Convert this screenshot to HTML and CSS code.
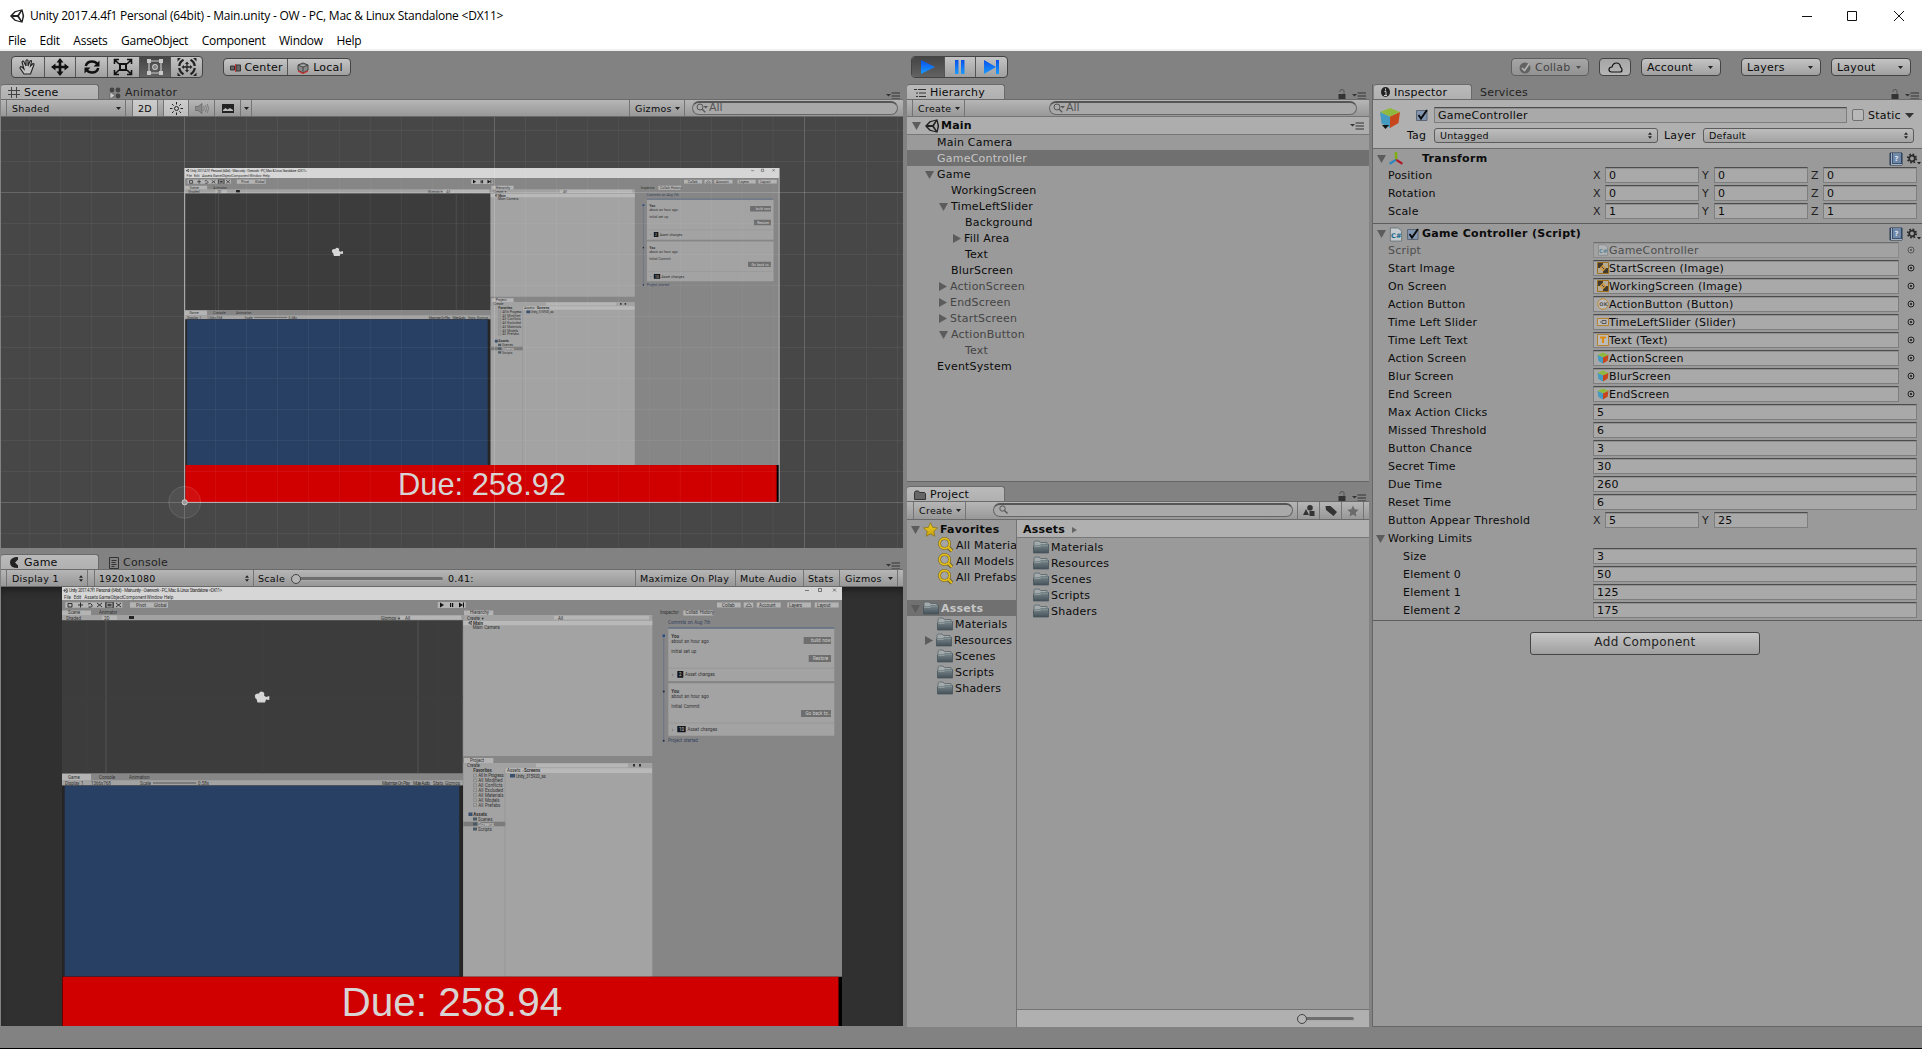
FILE: index.html
```html
<!DOCTYPE html>
<html lang="en">
<head>
<meta charset="utf-8">
<title>Unity 2017.4.4f1 Personal (64bit) - Main.unity - OW</title>
<link rel="stylesheet" href="styles.css">
</head>
<body>
<svg class="defs" width="0" height="0">
  <defs>
    <linearGradient id="blue" x1="0" y1="0" x2="0" y2="1"><stop offset="0" stop-color="#0a50e8"/><stop offset="1" stop-color="#1a9bff"/></linearGradient>
    <linearGradient id="fold" x1="0" y1="0" x2="0" y2="1"><stop offset="0" stop-color="#79868a"/><stop offset="1" stop-color="#46525a"/></linearGradient>
    <linearGradient id="gold" x1="0" y1="0" x2="0" y2="1"><stop offset="0" stop-color="#f0d020"/><stop offset="1" stop-color="#c8a010"/></linearGradient>
    <symbol id="unity" viewBox="0 0 16 16"><path d="M1 8 5.5 3.2 13.5 1.2 15.2 8 13.5 14.8 5.500 12.800ZM4 7.100h4.500L11.400 2.800 6.500 4.200ZM4 8.900l2.500 2.900 4.900 1.400-2.900-4.300ZM10 8l2.700 4.600L13.600 8l-.9-4.600Z" fill="#222" fill-rule="evenodd"/></symbol>
    <symbol id="folder" viewBox="0 0 16 14"><path d="M1 12V2.500Q1 1 2.500 1H6l1.500 1.500H14V12Z" fill="#a2aaac" stroke="#59656a" stroke-width=".8"/><path d="M.5 13V6H7l1-1.500h7.500V13Z" fill="url(#fold)" stroke="#445057" stroke-width=".7"/><path d="M1 6.500h6.300l1-1.500H15" fill="none" stroke="#9ba7aa" stroke-width=".8"/></symbol>
    <symbol id="menu" viewBox="0 0 14 8"><path d="M0 2h5L2.500 4.500Z" fill="#333"/><path d="M5.500 1.500H14M5.500 4.500H14M5.500 7.500H14" transform="translate(0 -.5)" stroke="#333" stroke-width="1"/></symbol>
    <symbol id="lock" viewBox="0 0 8 10"><path d="M.5 5h7v5h-7Z" fill="#333"/><path d="M2 3V2q0-1.500 2-1.500t2 1.500V5" fill="none" stroke="#555" stroke-width="1"/></symbol>
    <symbol id="down" viewBox="0 0 9 8"><path d="M0 0h9L4.500 8Z" fill="#5c5c5c"/></symbol>
    <symbol id="right" viewBox="0 0 8 9"><path d="M0 0v9L8 4.500Z" fill="#5c5c5c"/></symbol>
    <symbol id="caret" viewBox="0 0 5 3"><path d="M0 0h5L2.500 3Z" fill="#222"/></symbol>
    <symbol id="updown" viewBox="0 0 5 8"><path d="M0 3h5L2.500 0ZM0 5h5L2.500 8Z" fill="#222"/></symbol>
    <symbol id="find" viewBox="0 0 12 10"><circle cx="4" cy="4" r="3" fill="none" stroke="#555" stroke-width="1"/><path d="m6.200 6.200 3 3" stroke="#555" stroke-width="1.300"/><path d="M7.500 3H12L9.700 5.500Z" fill="#555"/></symbol>
    <symbol id="glass" viewBox="0 0 9 9"><circle cx="3.500" cy="3.500" r="2.700" fill="none" stroke="#555" stroke-width="1"/><path d="m5.500 5.500 3 3" stroke="#555" stroke-width="1.400"/></symbol>
    <symbol id="goldfind" viewBox="0 0 17 16"><circle cx="7.500" cy="6.500" r="5" fill="#a5a5a5" stroke="#6b6030" stroke-width="3"/><path d="m11 10 4 4" stroke="#6b6030" stroke-width="4"/><circle cx="7.500" cy="6.500" r="5" fill="none" stroke="#e4bd18" stroke-width="1.800"/><path d="m11 10 4 4" stroke="#e4bd18" stroke-width="2.200"/></symbol>
    <symbol id="star" viewBox="0 0 16 16"><path d="m8 .8 2.200 4.800 5.300.7-3.900 3.600.9 5.300L8 12.600l-4.500 2.600.9-5.300L.5 6.300l5.300-.7Z"/></symbol>
    <symbol id="cube" viewBox="0 0 22 22"><path d="M1 5 11 9.500V21L2.500 16.500Z" fill="#459ac0"/><path d="M21 5 11 9.500V21l8.500-5Z" fill="#c8461c"/><path d="M1 5 11 1l10 4-10 4.500Z" fill="#91b83e"/></symbol>
    <symbol id="check" viewBox="0 0 12 12"><path d="M.5 1.500h10.500v10H.5Z" fill="#8295b0" stroke="#5d6673"/><path d="m2.500 6 2.500 3.500L11 1" fill="none" stroke="#0a0a0a" stroke-width="1.900"/></symbol>
    <symbol id="book" viewBox="0 0 14 14"><path d="M1 1h12v12H1Z" fill="#3a5374" stroke="#27384e"/><path d="M4 1h8v10H4Z" fill="#6f88a8"/><path d="M2.500 1v12M3 12.500h10" stroke="#c6ccd4" stroke-width=".8"/><text x="5.600" y="9.300" font-family="DejaVu Sans" font-size="7" font-weight="bold" fill="#dde4ec">?</text></symbol>
    <symbol id="gear" viewBox="0 0 14 12"><circle cx="5" cy="5.500" r="2.800" fill="none" stroke="#2a2a2a" stroke-width="1.800"/><circle cx="5" cy="5.500" r="4.200" fill="none" stroke="#2a2a2a" stroke-width="1.800" stroke-dasharray="1.700 1.600"/><path d="M10 9h4l-2 2.500Z" fill="#222"/></symbol>
    <symbol id="target" viewBox="0 0 8 8"><circle cx="4" cy="4" r="3" fill="none" stroke="#222" stroke-width="1"/><circle cx="4" cy="4" r="1" fill="#111"/></symbol>
    <symbol id="cs" viewBox="0 0 14 16"><path d="M1 1h8.500L13 4.500V15H1Z" fill="#c5cbce" stroke="#6e777b"/><text x="1.700" y="12" font-family="DejaVu Sans" font-size="7" font-weight="bold" fill="#15678c">C#</text></symbol>
    <symbol id="img" viewBox="0 0 12 12"><path d="M.5.5h11v11H.5Z" fill="#b4aa98" stroke="#a06f1c"/><path d="M1 1h5v5H1ZM6 6h5v5H6Z" fill="#403a30"/><path d="m6 3.500 2.500 2.500L6 8.500 3.500 6Z" fill="none" stroke="#d39a3c" stroke-width="1.300"/></symbol>
  </defs>
</svg>

<header class="titlebar">
  <svg width="16" height="16"><use href="#unity"/></svg>
  <span class="title">Unity 2017.4.4f1 Personal (64bit) - Main.unity - OW - PC, Mac &amp; Linux Standalone &lt;DX11&gt;</span>
  <svg class="winctl" width="110" height="12"><path d="M3 6.500h10M48.500 1.500h9v9h-9ZM95 1l10 10M105 1 95 11" fill="none" stroke="#111"/></svg>
</header>
<nav class="menubar"><span>File</span><span>Edit</span><span>Assets</span><span>GameObject</span><span>Component</span><span>Window</span><span>Help</span></nav>

<section class="toolbar">
  <div class="group tools">
    <i><svg width="20" height="18" viewBox="0 0 20 18"><path d="M6 16 2 10q0-2 2-1l2 2L4 4q1-2 2 0l2 4V2.500q1-1.500 2 0V8l2-5q1.500-1 1.500.5L12.500 8l2.500-2.500q1.500 0 .8 1.500L14 12l-1.500 4Z" fill="#c4c4c4" stroke="#222" stroke-width="1.100"/></svg></i>
    <i><svg width="18" height="18" viewBox="0 0 18 18"><path d="M9 2v14M2 9h14" stroke="#111" stroke-width="2.600"/><path d="m9 0 3.500 4.500h-7ZM9 18l3.500-4.500h-7ZM0 9l4.500-3.500v7ZM18 9l-4.500-3.500v7Z" fill="#111"/></svg></i>
    <i><svg width="18" height="18" viewBox="0 0 18 18"><path d="M2.800 8Q4 3.500 9 3.500q3.500 0 5.500 2.500M15.200 10q-1 4.500-6.200 4.500-3.500 0-5.500-2.500" fill="none" stroke="#111" stroke-width="2.500"/><path d="M16.500 2.500V8.500h-6ZM1.500 15.500v-6h6Z" fill="#111"/></svg></i>
    <i><svg width="20" height="18" viewBox="0 0 20 18"><path d="M7 6h6v6H7Z" fill="none" stroke="#111" stroke-width="2"/><path d="m2 2 4 4m12-4-4 4M2 16l4-4m12 4-4-4M1.500 6V1.500H6m8 0h4.500V6M1.500 12v4.500H6m8 0h4.500V12" fill="none" stroke="#111" stroke-width="1.600"/></svg></i>
    <i class="on"><svg width="18" height="18" viewBox="0 0 18 18"><path d="M3 3h12v12H3Z" fill="none" stroke="#c8c8c8" stroke-width="1.200"/><path d="M1 1h4v4H1Zm12 0h4v4h-4ZM1 13h4v4H1Zm12 0h4v4h-4Z" fill="#c8c8c8"/><circle cx="9" cy="9" r="2.300" fill="none" stroke="#c8c8c8" stroke-width="1.200"/><circle cx="9" cy="9" r=".8" fill="#c8c8c8"/></svg></i>
    <i><svg width="20" height="18" viewBox="0 0 20 18"><path d="M10 5v8M6 9h8" stroke="#222" stroke-width="1.300"/><path d="m10 3.500 2 2.500H8ZM10 14.500l2-2.500H8ZM4.500 9 7 7v4ZM15.500 9 13 7v4Z" fill="#222"/><path d="M2.300 8Q2.600 4 6.500 1.800m7 0Q17.400 4 17.700 8m0 2q-.3 4-4.200 6.200m-7 0Q2.600 14 2.300 10" fill="none" stroke="#222" stroke-width="2.300"/><path d="M.5 0H4L.5 3.500ZM19.500 0H16l3.500 3.500ZM.5 18H4L.5 14.500ZM19.500 18H16l3.500-3.500Z" fill="#222"/></svg></i>
  </div>
  <div class="group pivot">
    <i><svg width="11" height="8" viewBox="0 0 11 8"><path d="M.5 2h4v4h-4ZM6 1h4.500v6H6Z" fill="#666" stroke="#333"/><path d="M5.500 0v8" stroke="#c33" stroke-width="1"/></svg>Center</i>
    <i><svg width="12" height="12" viewBox="0 0 12 12"><path d="M1 3l5-2 5 2v5l-5 3-5-3Zm0 0 5 2 5-2M6 5v6" fill="#888" stroke="#444"/><path d="m1 9 5 2.500L11 9" fill="none" stroke="#c33" stroke-width="1.300"/></svg>Local</i>
  </div>
  <div class="group play">
    <i class="on"><svg width="16" height="16"><path d="M1 1v14L15 8Z" fill="url(#blue)"/></svg></i>
    <i><svg width="10" height="14"><path d="M0 0h3.500v14H0ZM6 0h3.500v14H6Z" fill="url(#blue)"/></svg></i>
    <i><svg width="16" height="14"><path d="M0 0v14l12-7ZM12 0h3v14h-3Z" fill="url(#blue)"/></svg></i>
  </div>
  <div class="btn collab"><svg width="12" height="12" viewBox="0 0 12 12"><circle cx="6" cy="6" r="5.500" fill="#4b4b4b"/><path d="m3 6 2.500 2.500L10 2" fill="none" stroke="#ddd" stroke-width="1.700"/></svg>Collab<svg class="end" width="5" height="3"><use href="#caret"/></svg></div>
  <div class="btn cloud"><svg width="15" height="11" viewBox="0 0 15 11"><path d="M3.500 10Q1 10 1 7.500T4 5q1-4 4.500-4t4 4Q14 6 14 8t-2 2Z" fill="none" stroke="#111" stroke-width="1.200"/></svg></div>
  <div class="btn acct">Account<svg class="end" width="5" height="3"><use href="#caret"/></svg></div>
  <div class="btn lays">Layers<svg class="end" width="5" height="3"><use href="#caret"/></svg></div>
  <div class="btn">Layout<svg class="end" width="5" height="3"><use href="#caret"/></svg></div>
</section>

<main class="work">
  <div class="col left">
    <section class="panel scene">
      <div class="tabs"><div class="tab"><svg width="12" height="11"><path d="M3.500 0v11M8.500 0v11M0 3.500h12M0 7.500h12" stroke="#444"/></svg>Scene</div><div class="tab off"><svg width="12" height="12"><circle cx="3" cy="3" r="2.400" fill="#444"/><circle cx="9" cy="3" r="2.400" fill="#444"/><circle cx="9" cy="9" r="2.400" fill="#444"/><path d="M1 5v7l5-3.500Z" fill="#ccc" stroke="#555" stroke-width=".6"/></svg>Animator</div><svg class="pm" width="14" height="8"><use href="#menu"/></svg></div>
      <div class="bar">
        <span class="cell shaded">Shaded<svg width="5" height="3"><use href="#caret"/></svg></span>
        <span class="cell lit d2">2D</span>
        <span class="cell lit sun"><svg width="13" height="13" viewBox="0 0 13 13"><circle cx="6.500" cy="6.500" r="2" fill="none" stroke="#222"/><path d="M6.500 0v2.500m0 8V13M0 6.500h2.500m8 0H13M2 2l1.700 1.700m5.600 5.600L11 11M11 2 9.300 3.700M3.700 9.300 2 11" stroke="#222"/></svg></span>
        <span class="cell snd"><svg width="14" height="11" viewBox="0 0 14 11"><path d="M0 3.500h3L7 .5v10L3 7.500H0Z" fill="#888" stroke="#666" stroke-width=".7"/><path d="M8.500 3q1.500 2.500 0 5M10.500 2q2 3.500 0 7M12.300 1q2.400 4.500 0 9" fill="none" stroke="#777" stroke-width=".9"/></svg></span>
        <span class="cell pic"><svg width="12" height="9"><path d="M0 0h12v9H0Z" fill="#222"/><path d="M1 7V6l2.500-2 2 1.500L8 4l3 2v1Z" fill="#bbb"/></svg></span>
        <span class="cell picdd"><svg width="5" height="3"><use href="#caret"/></svg></span>
        <span class="cell giz">Gizmos<svg width="5" height="3"><use href="#caret"/></svg></span>
        <span class="search"><svg width="12" height="10"><use href="#find"/></svg>All</span>
      </div>
      <div class="view sceneview">
        <svg width="903" height="431" viewBox="1 117 903 431">
          <svg x="185" y="168" width="594.300" height="334.300" viewBox="0 0 780 438.700" preserveAspectRatio="none">
            <g id="capture"><g class="shot">
              <path d="M0 0h780v439H0Z" fill="#868686"/><path d="M0 0h780v13H0Z" fill="#d6d6d6"/>
              <svg x="1" y="1" width="5" height="5"><use href="#unity"/></svg>
              <text x="7" y="5.200" textLength="153">Unity 2017.4.7f1 Personal (64bit) - Main.unity - Overwork - PC, Mac &amp; Linux Standalone &lt;DX11&gt;</text>
              <text x="2" y="11.500">File</text><text x="11.700" y="11.500">Edit</text><text x="22.300" y="11.500">Assets</text><text x="36.700" y="11.500">GameObject</text><text x="61" y="11.500">Component</text><text x="84.700" y="11.500">Window</text><text x="102" y="11.500">Help</text>
              <path d="M743 3.500h4M756.500 1.500h3v3h-3ZM771 1.500l3 3m0-3-3 3" fill="none" stroke="#333" stroke-width=".6"/>
              <path d="M3.300 15.200h57v5.600h-57ZM68 15.200h38v5.600H68ZM375.700 15h28v6h-28ZM655 15.400h23.700v5H655ZM681.700 15.400h9.600v5h-9.600ZM694.700 15.400h24v5h-24ZM725.300 15.400h23.700v5h-23.700ZM752.700 15.400h24v5h-24Z" fill="#b4b4b4"/>
              <path d="M43 15.200h9v5.600h-9Z" fill="#444"/>
              <path d="M6 16.500h4v3.500H6ZM16 18h5M18.500 15.500v5M26 17q3-1.500 4 1t-3.500 2M35 16l5 4m0-4-5 4M54 16l5 4m0-4-5 4" fill="none" stroke="#222" stroke-width=".9"/><path d="M45 16.300h5v3.500h-5Z" fill="none" stroke="#ccc" stroke-width=".7"/>
              <path d="M378 15.500v5l4-2.500ZM388 16h1.200v4H388Zm2 0h1.200v4H390ZM397 15.500v5l4-2.500Zm4 0h1v5h-1Z" fill="#111"/>
              <text x="74" y="19.700">Pivot</text><text x="92" y="19.700">Global</text><text x="660" y="19.700">Collab</text><text x="697" y="19.700">Account</text><text x="727" y="19.700">Layers</text><text x="755" y="19.700">Layout</text><path d="m684 19.500 2-2.500h2l1.500 2.500Z" fill="none" stroke="#333" stroke-width=".5"/>
              <path d="M0 23.400h29v5H0ZM402 23.400h29.300v5H402ZM621.300 23.400h30v5h-30ZM0 187h29v6.500H0ZM402 171h29.300v5H402Z" fill="#b4b4b4"/>
              <path d="M0 28h400.700v5.400H0ZM401.300 28h189v5.400h-189ZM0 193.300h400.700v5H0ZM401.300 176h189v5h-189Z" fill="#a2a2a2"/>
              <path d="M40 28.500h15v4.500H40ZM338 28.700h61v3.800h-61ZM492 28.700h95v3.800h-95ZM474 176.500h92v3.800h-92Z" fill="#b6b6b6"/>
              <text x="6" y="27.400">Scene</text><text x="37" y="27.400">Animator</text><text x="408" y="27.400">Hierarchy</text><text x="598" y="27.400">Inspector</text><text x="623.500" y="27.400">Collab History</text>
              <text x="4" y="32.500">Shaded</text><text x="42" y="32.500">2D</text><text x="319" y="32.500">Gizmos ▾</text><text x="405" y="32.500">Create ▾</text><text x="343" y="32.500">All</text><text x="496" y="32.500">All</text><path d="M67 29h5v3h-5Z" fill="#222"/>
              <path d="M0 33.300h400.700v153H0Z" fill="#3c3c3c"/><path d="M44 33.300v153M356 33.300v153" stroke="#575757" stroke-width=".9"/><path d="M25 33.300v153M201 33.300v153M376 33.300v153M0 110h401" stroke="#424242" stroke-width=".6"/>
              <path d="M193 108q1-2 4-1.500 1-3 4-1.500 2 1 1 3.500l2 1.500 3.300-1v4l-3.300-.5-1 3h-7.500l-1-3.500q-2-1-1.500-4Z" fill="#d6d6d6"/>
              <text x="6" y="191.800">Game</text><text x="37" y="191.800">Console</text><text x="67" y="191.800">Animation</text>
              <text x="3" y="197.600">Display 1</text><text x="29" y="197.600">1366x768</text><text x="78" y="197.600">Scale</text><path d="M91 196h43" stroke="#555"/><text x="136" y="197.600">0.58x</text><text x="320" y="197.600" textLength="28">Maximize On Play</text><text x="351" y="197.600" textLength="17">Mute Audio</text><text x="371" y="197.600">Stats</text><text x="383" y="197.600">Gizmos</text>
              <path d="M0 198.400h401v192H0Z" fill="#252525"/><path d="M2.700 198.700h394.600v191H2.700Z" fill="#284063"/>
              <path d="M401.300 33.400h189v135.600h-189ZM401.300 181h189v209h-189Z" fill="#a3a3a3"/><path d="M401.300 33.700h189v4.600h-189ZM443 181.300h147v4.700H443Z" fill="#b9b9b9"/><path d="M443 181v209" stroke="#939393" stroke-width=".7"/>
              <svg x="406" y="33.700" width="4.500" height="4.500"><use href="#unity"/></svg>
              <text class="b" x="411" y="37.500">Main</text><text x="410.700" y="42.300">Main Camera</text>
              <text x="408" y="175">Project</text><text x="405" y="180">Create</text><path d="M571 177h2v2.500h-2ZM577 177h2v2.500h-2Z" fill="#333"/>
              <text class="b" x="411.300" y="185.400">Favorites</text><text x="416.300" y="190.300" textLength="25.500">All In Progress</text><text x="416.300" y="195.200">All Modified</text><text x="416.300" y="200.100">All Conflicts</text><text x="416.300" y="205">All Excluded</text><text x="416.300" y="209.900">All Materials</text><text x="416.300" y="214.800">All Models</text><text x="416.300" y="219.700">All Prefabs</text>
              <path d="M411.500 187h3v3h-3Zm0 4.900h3v3h-3Zm0 4.900h3v3h-3Zm0 4.900h3v3h-3Zm0 4.900h3v3h-3Zm0 4.900h3v3h-3Zm0 4.900h3v3h-3Z" fill="none" stroke="#777" stroke-width=".5"/>
              <path d="M401.300 234.700h42v4.600h-42Z" fill="#7b7b7b"/><path d="M406.500 225.500h4v3.500h-4ZM448 187h5v3.500h-5Z" fill="#39506f"/><path d="M411 230.500h4v3h-4Zm0 5h4v3h-4Zm0 5h4v3h-4Z" fill="#4b5962"/>
              <text class="b" x="411.300" y="229">Assets</text><text x="416" y="234">Scenes</text><text class="lt" x="416" y="239">Screens</text><text x="416" y="244">Scripts</text>
              <text x="445" y="185.400">Assets ›</text><text class="b" x="462" y="185.400">Screens</text><text x="453.700" y="190.900" textLength="30">Unity_315920_as</text>
              <text class="bl" x="606" y="36.700">Commits on Aug 7th</text>
              <path d="M606.300 42h166v52h-166ZM606.300 96.300h166v52.400h-166Z" fill="#a3a3a3"/><path d="M606.300 40h166v1.700h-166Z" fill="#6a7688"/><path d="M606.300 81.200h166M606.300 136h166" stroke="#949494" stroke-width=".7"/>
              <path d="M601.700 48.700v105" stroke="#6f7687" stroke-width="1.200"/><path d="M600.500 47.500h2.500v2.500h-2.500Z" fill="#2c4d80"/><circle cx="601.700" cy="104.500" r="1" fill="#222c44"/><circle cx="601.700" cy="153.700" r="1" fill="#222c44"/>
              <path d="M741.700 50H769v7h-27.300ZM746.700 68H769v7h-22.300ZM739 123h30v7h-30Z" fill="#6e6e6e"/><path d="M615.300 84h6v6.700h-6ZM615.300 139h8.400v6.300h-8.400Z" fill="#15171c"/>
              <text class="b" x="609.300" y="51.300">You</text><text x="609.300" y="56.300">about an hour ago</text><text x="609.300" y="65.700">initial set up</text><text class="lt" x="749" y="55">build now</text><text class="lt" x="751" y="73">Restore</text><text x="610" y="89">›</text><text class="lt" x="617" y="89">2</text><text x="623" y="89">Asset changes</text>
              <text class="b" x="609.300" y="106">You</text><text x="609.300" y="111.300">about an hour ago</text><text x="609.300" y="120.600">Initial Commit</text><text class="lt" x="743.500" y="128">Go back to...</text><text x="610" y="144">›</text><text class="lt" x="617" y="144">10</text><text x="625.500" y="144">Asset changes</text>
              <text class="bl" x="606" y="155.300">Project started</text>
              <path d="M0 389.700h780v49.300H0Z" fill="#000"/><path d="M.5 389.700H776.500v49.300H.5Z" fill="#d00000"/>
            </g></g>
            <text class="due" x="279.500" y="429">Due: 258.92</text>
          </svg>
          <g stroke="#fff" stroke-opacity=".05"><path d="M29.700 117v431M60.700 117v431M91.700 117v431M122.600 117v431M153.600 117v431M215.500 117v431M246.500 117v431M277.500 117v431M308.400 117v431M339.400 117v431M370.300 117v431M401.300 117v431M432.300 117v431M463.300 117v431M525.500 117v431M556.500 117v431M587.400 117v431M618.400 117v431M649.300 117v431M680.300 117v431M711.300 117v431M742.200 117v431M773.200 117v431M835.500 117v431M866.500 117v431M897.500 117v431M1 130.500h903M1 161.500h903M1 223.500h903M1 254.500h903M1 285.500h903M1 316.500h903M1 347.500h903M1 378.500h903M1 409.500h903M1 440.500h903M1 471.500h903M1 533.500h903"/></g>
          <path d="M184.500 117v431M494.500 117v431M804.500 117v431M1 192.500h903M1 502.500h903" stroke="#fff" stroke-opacity=".17"/>
          <path d="M184.700 168v334.400h594.500V168" fill="none" stroke="#ccc" stroke-opacity=".8"/>
          <circle cx="184.700" cy="502.300" r="16" fill="#fff" fill-opacity=".06" stroke="#fff" stroke-opacity=".12"/><circle cx="184.700" cy="502.300" r="2.600" fill="#999" stroke="#ccc"/>
        </svg>
      </div>
    </section>
    <section class="panel game">
      <div class="tabs"><div class="tab"><svg width="9" height="11"><path d="M8 0Q0 0 0 5.500T8 11V8.500L5 5.500 8 2.500Z" fill="#222"/></svg>Game</div><div class="tab off con"><svg width="10" height="12"><path d="M.5.500h9v11h-9Z" fill="none" stroke="#333"/><path d="M2.500 3.500h5M2.500 5.500h4M2.500 7.500h5M2.500 9.500h3" stroke="#333"/></svg>Console</div><svg class="pm" width="14" height="8"><use href="#menu"/></svg></div>
      <div class="bar">
        <span class="cell disp">Display 1<svg width="4" height="7"><use href="#updown"/></svg></span>
        <span class="cell res">1920x1080<svg width="4" height="7"><use href="#updown"/></svg></span>
        <span class="scale">Scale</span><span class="slider"><b></b></span><span class="zoom">0.41:</span>
        <span class="cell mx">Maximize On Play</span><span class="cell mu">Mute Audio</span><span class="cell st">Stats</span><span class="cell gz">Gizmos<svg width="5" height="3"><use href="#caret"/></svg></span>
      </div>
      <div class="view gameview">
        <svg width="780" height="439" viewBox="0 0 780 439"><use href="#capture"/><text class="due" x="279.500" y="429">Due: 258.94</text></svg>
      </div>
    </section>
  </div>

  <div class="col mid">
    <section class="panel hier">
      <div class="tabs"><div class="tab"><svg width="12" height="10"><path d="M0 1.500h3M4 1.500h8M2 5h2M5 5h7M2 8.500h2M5 8.500h7" stroke="#333"/></svg>Hierarchy</div><svg class="lk" width="8" height="10"><use href="#lock"/></svg><svg class="pm" width="14" height="8"><use href="#menu"/></svg></div>
      <div class="bar"><span class="cell create">Create<svg width="5" height="3"><use href="#caret"/></svg></span><span class="search"><svg width="12" height="10"><use href="#find"/></svg>All</span></div>
      <div class="main"><svg width="9" height="8"><use href="#down"/></svg><svg class="u" width="16" height="16"><use href="#unity"/></svg><b>Main</b><svg class="mm" width="14" height="8"><use href="#menu"/></svg></div>
      <ul class="tree">
        <li class="l1">Main Camera</li>
        <li class="l1 sel">GameController</li>
        <li class="l1"><svg width="9" height="8"><use href="#down"/></svg>Game</li>
        <li class="l2">WorkingScreen</li>
        <li class="l2"><svg width="9" height="8"><use href="#down"/></svg>TimeLeftSlider</li>
        <li class="l3">Background</li>
        <li class="l3"><svg width="8" height="9"><use href="#right"/></svg>Fill Area</li>
        <li class="l3">Text</li>
        <li class="l2">BlurScreen</li>
        <li class="l2 dim"><svg width="8" height="9"><use href="#right"/></svg>ActionScreen</li>
        <li class="l2 dim"><svg width="8" height="9"><use href="#right"/></svg>EndScreen</li>
        <li class="l2 dim"><svg width="8" height="9"><use href="#right"/></svg>StartScreen</li>
        <li class="l2 dim"><svg width="9" height="8"><use href="#down"/></svg>ActionButton</li>
        <li class="l3 dim">Text</li>
        <li class="l1">EventSystem</li>
      </ul>
    </section>
    <section class="panel proj">
      <div class="tabs"><div class="tab"><svg width="12" height="10"><path d="M.5 9.500v-7l1-1.500h3l1 1.500h5l1 1v6Z" fill="#666" stroke="#333"/></svg>Project</div><svg class="lk" width="8" height="10"><use href="#lock"/></svg><svg class="pm" width="14" height="8"><use href="#menu"/></svg></div>
      <div class="bar"><span class="cell create">Create<svg width="5" height="3"><use href="#caret"/></svg></span><span class="search"><svg width="9" height="9"><use href="#glass"/></svg></span>
        <span class="cell ic"><svg width="12" height="11"><circle cx="7" cy="2.800" r="2.800" fill="#333"/><path d="m0 10 3-6 3 6ZM6.500 6h5v5h-5Z" fill="#333"/></svg></span><span class="cell ic"><svg width="12" height="11"><path d="M.500 1h5L12 7l-3.500 4L1 5Z" fill="#333"/></svg></span><span class="cell ic last"><svg width="12" height="12" fill="#6a6a6a"><use href="#star"/></svg></span></div>
      <div class="split">
        <ul class="tree side">
          <li class="p0"><svg width="9" height="8"><use href="#down"/></svg><svg class="fi" width="15" height="15" fill="url(#gold)" stroke="#8a7214" stroke-width=".8"><use href="#star"/></svg><b>Favorites</b></li>
          <li class="p1"><svg class="fi" width="17" height="16"><use href="#goldfind"/></svg>All Materia</li>
          <li class="p1"><svg class="fi" width="17" height="16"><use href="#goldfind"/></svg>All Models</li>
          <li class="p1"><svg class="fi" width="17" height="16"><use href="#goldfind"/></svg>All Prefabs</li>
          <li class="gap"></li>
          <li class="p0 sel"><svg width="9" height="8"><use href="#down"/></svg><svg class="fi" width="16" height="14"><use href="#folder"/></svg><b>Assets</b></li>
          <li class="p1"><svg class="fi" width="16" height="14"><use href="#folder"/></svg>Materials</li>
          <li class="p1"><svg width="8" height="9"><use href="#right"/></svg><svg class="fi" width="16" height="14"><use href="#folder"/></svg>Resources</li>
          <li class="p1"><svg class="fi" width="16" height="14"><use href="#folder"/></svg>Scenes</li>
          <li class="p1"><svg class="fi" width="16" height="14"><use href="#folder"/></svg>Scripts</li>
          <li class="p1"><svg class="fi" width="16" height="14"><use href="#folder"/></svg>Shaders</li>
        </ul>
        <div class="files">
          <div class="crumb"><b>Assets</b><svg width="5" height="6"><path d="M0 0v6l5-3Z" fill="#666"/></svg></div>
          <ul class="tree">
            <li><svg class="fi" width="16" height="14"><use href="#folder"/></svg>Materials</li>
            <li><svg class="fi" width="16" height="14"><use href="#folder"/></svg>Resources</li>
            <li><svg class="fi" width="16" height="14"><use href="#folder"/></svg>Scenes</li>
            <li><svg class="fi" width="16" height="14"><use href="#folder"/></svg>Scripts</li>
            <li><svg class="fi" width="16" height="14"><use href="#folder"/></svg>Shaders</li>
          </ul>
          <div class="foot"><span class="slider"><b></b></span></div>
        </div>
      </div>
    </section>
  </div>

  <div class="col right">
    <section class="panel insp">
      <div class="tabs"><div class="tab"><svg width="9" height="11"><ellipse cx="4.500" cy="5" rx="4.500" ry="5" fill="#222"/><path d="M4.500 1.500v2M3.500 4.500h1.500v4M3 8.500h3" stroke="#ccc" fill="none"/></svg>Inspector</div><div class="tab off serv">Services</div><svg class="lk" width="8" height="10"><use href="#lock"/></svg><svg class="pm" width="14" height="8"><use href="#menu"/></svg></div>
      <div class="head">
        <svg class="go" width="22" height="22"><use href="#cube"/><path d="M3 18h7l-3.500 4Z" fill="#111"/></svg>
        <div class="hrows">
          <div class="hrow"><svg class="ck" width="12" height="12"><use href="#check"/></svg><span class="field name">GameController</span><span class="box"></span><span>Static</span><svg class="sd" width="9" height="5"><path d="M0 0h9L4.500 5Z" fill="#333"/></svg></div>
          <div class="hrow two"><span class="tag">Tag</span><span class="drop t1">Untagged<svg width="4" height="7"><use href="#updown"/></svg></span><span class="lay">Layer</span><span class="drop t2">Default<svg width="4" height="7"><use href="#updown"/></svg></span></div>
        </div>
      </div>
      <div class="comp c1">
        <div class="ctitle"><svg width="9" height="8"><use href="#down"/></svg><svg class="ci" width="14" height="13" viewBox="0 0 14 13"><path d="M5.700 0h2.600v8H5.700Z" fill="#7fae14"/><path d="M6.500 6.800 0 10.800l1.200 1.900L7 9Z" fill="#2f86bd"/><path d="M7.500 6.800 14 10.800l-1.200 1.900L7 9Z" fill="#b01c2c"/></svg><b>Transform</b><svg class="bk" width="14" height="14"><use href="#book"/></svg><svg width="14" height="12"><use href="#gear"/></svg></div>
        <div class="row"><label>Position</label><em>X</em><span class="field">0</span><em>Y</em><span class="field">0</span><em>Z</em><span class="field">0</span></div>
        <div class="row"><label>Rotation</label><em>X</em><span class="field">0</span><em>Y</em><span class="field">0</span><em>Z</em><span class="field">0</span></div>
        <div class="row"><label>Scale</label><em>X</em><span class="field">1</span><em>Y</em><span class="field">1</span><em>Z</em><span class="field">1</span></div>
      </div>
      <div class="comp c2">
        <div class="ctitle"><svg width="9" height="8"><use href="#down"/></svg><svg class="ci" width="13" height="15"><use href="#cs"/></svg><svg class="cc" width="12" height="12"><use href="#check"/></svg><b>Game Controller (Script)</b><svg class="bk" width="14" height="14"><use href="#book"/></svg><svg width="14" height="12"><use href="#gear"/></svg></div>
        <div class="row obj faded"><label>Script</label><span class="field"><svg width="12" height="12"><use href="#cs"/></svg>GameController</span><svg width="8" height="8"><use href="#target"/></svg></div>
        <div class="row obj"><label>Start Image</label><span class="field"><svg width="12" height="12"><use href="#img"/></svg>StartScreen (Image)</span><svg width="8" height="8"><use href="#target"/></svg></div>
        <div class="row obj"><label>On Screen</label><span class="field"><svg width="12" height="12"><use href="#img"/></svg>WorkingScreen (Image)</span><svg width="8" height="8"><use href="#target"/></svg></div>
        <div class="row obj"><label>Action Button</label><span class="field"><svg width="12" height="12"><circle cx="6" cy="6" r="5.300" fill="#bbb" stroke="#c08a34"/><text x="2.300" y="8" font-size="5" font-weight="bold" fill="#555">OK</text></svg>ActionButton (Button)</span><svg width="8" height="8"><use href="#target"/></svg></div>
        <div class="row obj"><label>Time Left Slider</label><span class="field"><svg width="12" height="12"><path d="M.5 2.500h11v7H.5Z" fill="#bbb" stroke="#b8822c"/><path d="M5 4.500h4v3H5Z" fill="none" stroke="#555"/><path d="M3 6h1" stroke="#555"/></svg>TimeLeftSlider (Slider)</span><svg width="8" height="8"><use href="#target"/></svg></div>
        <div class="row obj"><label>Time Left Text</label><span class="field"><svg width="12" height="12"><path d="M.5.500h11v11H.5Z" fill="#bbb" stroke="#b8822c"/><path d="M3 3.500h6M6 3v6" stroke="#dd8a10" stroke-width="2"/></svg>Text (Text)</span><svg width="8" height="8"><use href="#target"/></svg></div>
        <div class="row obj"><label>Action Screen</label><span class="field"><svg width="12" height="12"><use href="#cube"/></svg>ActionScreen</span><svg width="8" height="8"><use href="#target"/></svg></div>
        <div class="row obj"><label>Blur Screen</label><span class="field"><svg width="12" height="12"><use href="#cube"/></svg>BlurScreen</span><svg width="8" height="8"><use href="#target"/></svg></div>
        <div class="row obj"><label>End Screen</label><span class="field"><svg width="12" height="12"><use href="#cube"/></svg>EndScreen</span><svg width="8" height="8"><use href="#target"/></svg></div>
        <div class="row num"><label>Max Action Clicks</label><span class="field">5</span></div>
        <div class="row num"><label>Missed Threshold</label><span class="field">6</span></div>
        <div class="row num"><label>Button Chance</label><span class="field">3</span></div>
        <div class="row num"><label>Secret Time</label><span class="field">30</span></div>
        <div class="row num"><label>Due Time</label><span class="field">260</span></div>
        <div class="row num"><label>Reset Time</label><span class="field">6</span></div>
        <div class="row"><label>Button Appear Threshold</label><em>X</em><span class="field">5</span><em>Y</em><span class="field">25</span></div>
        <div class="row"><label class="fold"><svg width="9" height="8"><use href="#down"/></svg>Working Limits</label></div>
        <div class="row num sub"><label>Size</label><span class="field">3</span></div>
        <div class="row num sub"><label>Element 0</label><span class="field">50</span></div>
        <div class="row num sub"><label>Element 1</label><span class="field">125</span></div>
        <div class="row num sub"><label>Element 2</label><span class="field">175</span></div>
      </div>
      <div class="addc">Add Component</div>
    </section>
  </div>
</main>
<footer class="status"></footer>
</body>
</html>
```
FILE: styles.css
```css
* { box-sizing: border-box; }
html, body { margin: 0; height: 1049px; overflow: hidden; }
body {
  display: flex; flex-direction: column; width: 1922px;
  background: #828282; color: #0b0b0b;
  font: 11px/16px "DejaVu Sans", Verdana, sans-serif; letter-spacing: .2px;
  white-space: nowrap;
}
.defs { position: absolute; }
svg { flex: none; display: block; }
ul { list-style: none; margin: 0; padding: 0; }
i, em { font-style: normal; }

.titlebar, .menubar { background: #fff; color: #000; font-family: "Open Sans", "Noto Sans", sans-serif; font-size: 12px; letter-spacing: -.23px; display: flex; align-items: center; }
.titlebar { height: 32px; padding: 0 13px 0 9px; }
.title { margin-left: 5px; }
.winctl { margin-left: auto; }
.menubar { height: 19px; padding: 0 0 0 8px; border-bottom: 2px solid #f0f0f0; letter-spacing: -.27px; line-height: 19px; }
.menubar span { margin-right: 13.600px; }

.toolbar { height: 33px; padding-left: 11px; display: flex; align-items: flex-start; }
.group, .btn { border: 1px solid #444; border-radius: 4px; background: linear-gradient(#c4c4c4, #a0a0a0); overflow: hidden; }
.group { display: flex; }
.group i { display: flex; align-items: center; justify-content: center; border-left: 1px solid #555; }
.group i:first-child { border-left: 0; }
.group .on { background: linear-gradient(#444, #626262); }
.tools { width: 192px; height: 22px; margin-top: 5px; }
.tools i { width: 32px; }
.pivot { width: 128px; height: 18px; margin: 7px 0 0 20px; line-height: 18px; }
.pivot i { width: 64px; gap: 3px; padding: 1px 0 0 2px; }
.pivot i:last-child { gap: 4px; }
.play { width: 97px; height: 22px; margin: 5px 0 0 560px; }
.play i { width: 32px; }
.btn { height: 18px; width: 80px; margin: 7px 10px 0 0; padding: 1px 7px 0 5px; display: flex; align-items: center; }
.btn .end { margin-left: auto; }
.collab { margin-left: 503px; padding-left: 7px; gap: 4px; opacity: .55; width: 78px; }
.cloud { width: 32px; justify-content: center; padding: 0; background: linear-gradient(#a6a6a6, #b5b5b5); }
.acct { margin-right: 20px; }

.work { height: 943px; display: flex; padding-left: 1px; }
.col { display: flex; flex-direction: column; }
.left { width: 902px; }
.mid { width: 462px; margin: 0 3px 0 4px; }
.right { width: 550px; }
.panel { display: flex; flex-direction: column; }
.tabs { height: 15px; display: flex; }
.tab { width: 98px; height: 15px; background: linear-gradient(#bababa, #b0b0b0); border: solid #6a6a6a; border-width: 1px 1px 0 0; border-radius: 3px 3px 0 0; padding: 1px 0 0 7px; display: flex; align-items: center; gap: 4px; line-height: 14px; }
.tab.off { background: none; border-color: transparent; width: auto; color: #222; padding-left: 10px; }
.game .tab:first-child { gap: 5px; padding-left: 9px; }
.pm { margin: 8px 3px 0 auto; }
.lk { margin: 5px 0 0 auto; }
.lk + .pm { margin-left: 6px; }
.bar { height: 18px; border: solid #6a6a6a; border-width: 1px 0; background: linear-gradient(#b6b6b6, #989898); display: flex; font-size: 9.500px; line-height: 17px; letter-spacing: .3px; }
.cell { display: flex; align-items: center; border: solid #747474; border-width: 0 1px 0 0; padding-left: 5px; }
.cell svg { margin: 0 4px 0 auto; }
.lit { background: linear-gradient(#cdcdcd, #bdbdbd); }
.search { height: 14px; margin-top: 1px; border: 1px solid #666; border-top: 2px solid #555; border-radius: 8px; background: #a9a9a9; display: flex; align-items: center; padding: 0 0 2px 3px; gap: 1px; font-size: 11px; letter-spacing: 0; color: #555; line-height: 10px; }

.scene { height: 465px; }
.shaded { width: 120px; margin-left: 5px; border-left-width: 1px; }
.d2 { width: 26px; margin-left: 6px; border-left-width: 1px; }
.sun { width: 26px; margin-left: 5px; border-left-width: 1px; }
.snd, .pic { width: 26px; }
.picdd { width: 11px; padding-left: 3px; }
.sun svg, .snd svg, .pic svg, .ic svg { margin: 0 auto; }
.sun, .snd, .pic, .ic { padding: 0; }
.giz { width: 56px; margin-left: 377px; border-left-width: 1px; }
.scene .search { width: 206px; margin-left: 7px; }
.view { overflow: hidden; }
.sceneview { height: 431px; background: #474747; }
.game { margin-top: 5px; }
.game .bar { height: 18px; }
.disp { width: 82px; margin-left: 5px; border-left-width: 1px; }
.res { width: 160px; margin-left: 6px; border-left-width: 1px; padding-left: 4px; }
.scale { margin-left: 4px; width: 33px; }
.slider { width: 152px; height: 4px; margin-top: 7px; background: #6e6e6e; border-radius: 2px; border-bottom: 1px solid #aaa; display: flex; }
.slider b { width: 10px; height: 10px; border: 1px solid #444; border-radius: 5px; background: #b4b4b4; margin-top: -3px; flex: none; }
.zoom { margin-left: 5px; width: 187px; }
.mx { width: 101px; border-left-width: 1px; padding-left: 4px; }
.mu { width: 68px; padding-left: 4px; }
.st { width: 36px; padding-left: 4px; }
.gz { width: 58px; }
.gameview { height: 439px; background: #303030; padding-left: 61px; box-shadow: inset 0 6px 8px -4px #181818; }
.shot text { font: 4.500px Roboto, "DejaVu Sans", sans-serif; letter-spacing: -.02px; word-spacing: .5px; fill: #333; }
.shot text.b { font-weight: bold; }
.shot text.lt { fill: #cfcfcf; }
.shot text.bl { fill: #34435e; }
.due { font: 40.500px "Liberation Sans", Arial, sans-serif; letter-spacing: 0; fill: #d8d4d4; }

.hier { height: 398px; border-bottom: 1px solid #666; background: #9a9a9a; }
.mid .tabs, .right .tabs { background: #828282; }
.hier .bar { border-bottom-color: #747474; }
.hier .create { width: 53px; margin-left: 5px; border-left-width: 1px; }
.hier .search { width: 308px; margin-left: 84px; }
.main { height: 18px; background: #adadad; border-bottom: 1px solid #777; display: flex; align-items: center; padding: 0 5px 0 5px; line-height: 18px; }
.main .u { margin: 0 1px 0 3px; }
.main b { padding-top: 1px; }
.main .mm { margin-left: auto; }
.tree li { height: 16px; display: flex; align-items: center; line-height: 16px; padding-top: 2px; }
.tree li svg { margin: -1px 3px 0 -12px; }
.tree li svg + .fi, .tree li .fi { margin: -2px 2px 0 0; }
.tree { letter-spacing: .22px; }
.hier .tree { margin-top: -1px; }
.l1 { padding-left: 30px; }
.l2 { padding-left: 44px; }
.l3 { padding-left: 58px; }
.dim { color: #444; }
.tree .sel { background: #707070; color: #c6c6c6; }

.proj { flex: 1; margin-top: 4px; }
.proj .bar { height: 19px; line-height: 18px; }
.proj .create { width: 53px; margin-left: 6px; border-left-width: 1px; }
.proj .search { width: 300px; margin: 1px 4px 0 27px; padding-left: 5px; }
.ic { width: 22px; }
.ic:not(.last) { border-left-width: 0; }
.search + .ic { width: 23px; border-left-width: 1px; }
.split { flex: 1; display: flex; background: #9a9a9a; }
.side { width: 110px; border-right: 1px solid #747474; overflow: hidden; padding-top: 1px; }
.side .p0 { padding-left: 16px; }
.side .p1 { padding-left: 30px; }
.side .gap { height: 15px; }
.files { flex: 1; display: flex; flex-direction: column; }
.crumb { height: 18px; background: #b0b0b0; border-bottom: 1px solid #777; display: flex; align-items: center; padding: 2px 0 0 6px; gap: 7px; line-height: 18px; }
.files .tree { padding: 1px 0 0 16px; flex: 1; }
.foot { height: 18px; border-top: 1px solid #747474; background: #b0b0b0; display: flex; padding-left: 280px; }
.foot .slider { width: 57px; }

.insp { height: 943px; background: #9a9a9a; border-bottom: 1px solid #666; border-left: 1px solid #666; }
.insp .tabs { padding-left: 1px; }
.serv { padding-left: 8px !important; }
.head { height: 50px; border: solid #6a6a6a; border-width: 1px 0 1px; background: #b0b0b0; display: flex; padding: 7px 0 0 6px; }
.hrows { flex: 1; padding-left: 6px; }
.hrow { height: 16px; display: flex; align-items: center; line-height: 17px; }
.hrow.two { margin-top: 4px; }
.ck { margin: 0 6px 0 9px; }
.field { height: 16px; border: 1px solid #7e7e7e; border-top: 1px solid #4c4c4c; box-shadow: inset 0 1px 0 #909090; background: #a9a9a9; padding-left: 3px; line-height: 15px; display: flex; align-items: center; overflow: hidden; }
.name { width: 413px; }
.box { width: 12px; height: 12px; margin: 0 4px 0 5px; border: 1px solid #707070; border-radius: 2px; background: #b8b8b8; }
.sd { margin-left: 4px; }
.tag { width: 27px; }
.drop { height: 15px; border: 1px solid #5c5c5c; border-radius: 3px; background: linear-gradient(#bdbdbd, #a3a3a3); font-size: 9.500px; letter-spacing: .3px; line-height: 13px; padding: 0 5px 0 5px; display: flex; align-items: center; justify-content: space-between; }
.t1 { width: 224px; }
.lay { margin-left: 6px; width: 39px; }
.t2 { width: 211px; }
.comp { border-bottom: 1px solid #5c5c5c; }
.c1 { height: 75px; }
.c2 { height: 397px; }
.ctitle { height: 18px; display: flex; align-items: center; padding: 1px 1px 0 4px; letter-spacing: .3px; }
.ci { width: 14px; margin: 0 19px 0 3px; }
.c2 .ci { margin-right: 4px; }
.cc { margin-right: 3px; }
.c1 b { line-height: 18px; padding-top: 1px; }
.bk { margin: 0 4px 0 auto; }
.row { height: 18px; display: flex; align-items: flex-start; padding-left: 15px; }
.row label { width: 206px; line-height: 17px; margin-right: -1px; }
.c2 .ctitle { height: 18px; padding-top: 2px; }
.row em { width: 12px; color: #222; line-height: 17px; }
.row em ~ em { margin-left: 3px; }
.row .field { width: 94px; }
.obj .field { width: 306px; padding-left: 3px; gap: 0; }
.obj > svg { margin: 4px 0 0 8px; }
.faded { opacity: .55; }
.num .field { width: 324px; }
.sub label { padding-left: 15px; }
.fold { display: flex; align-items: center; }
.fold svg { margin: 0 3px 0 -12px; }
.addc { width: 230px; height: 23px; margin: 11px 0 0 157px; border: 1px solid #444; border-radius: 3px; background: linear-gradient(#c6c6c6, #9f9f9f); text-align: center; font-size: 12px; letter-spacing: .35px; line-height: 19px; color: #222; }
.status { height: 22px; background: #828282; border-bottom: 1px solid #000; }
```
